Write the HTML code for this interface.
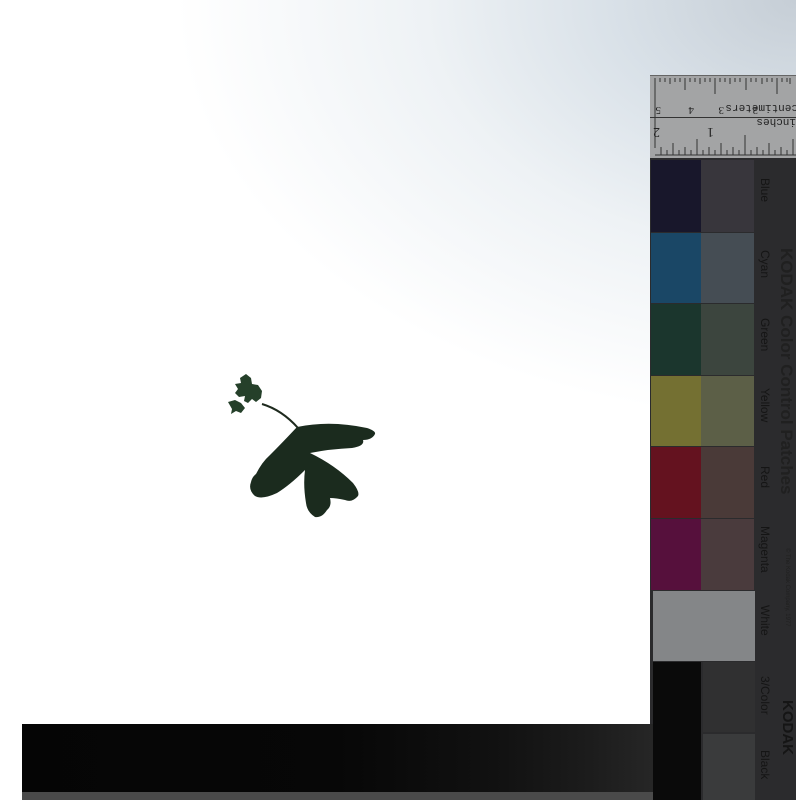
<!DOCTYPE html>
<html><head><meta charset="utf-8"><style>
html,body{margin:0;padding:0}
body{width:796px;height:800px;position:relative;overflow:hidden;
background:radial-gradient(ellipse 620px 420px at 796px 0px,#c6ced6 0%,#d9e1e8 30%,#eef2f5 60%,#ffffff 100%);
font-family:"Liberation Sans",sans-serif}
.a{position:absolute}
.lab{position:absolute;width:40px;transform-origin:0 0;color:#151515;font-size:12px;white-space:nowrap}
</style></head><body>
<!-- ruler -->
<div class="a" style="left:650px;top:75px;width:146px;height:82px;background:#a3a4a5;border-top:1px solid #666"></div>
<div class="a" style="left:650px;top:117px;width:146px;height:1px;background:#333"></div>
<svg class="a" style="left:650px;top:75px" width="146" height="82">
<g stroke="#333" stroke-width="1">
<path d="M5 3v70M35 3v12M65 3v16M96 3v12M127 3v16M20 3v6M50 3v6M80 3v6M112 3v6M140 3v6M10 3v4M15 3v4M25 3v4M30 3v4M40 3v4M45 3v4M55 3v4M60 3v4M70 3v4M75 3v4M85 3v4M90 3v4M101 3v4M106 3v4M117 3v4M122 3v4M132 3v4M137 3v4"/>
<path d="M5 80h141M11 80v-8M23 80v-12M35 80v-8M47 80v-16M59 80v-8M71 80v-12M83 80v-8M95 80v-20M107 80v-8M119 80v-12M131 80v-8M143 80v-16M17 80v-5M29 80v-5M41 80v-5M53 80v-5M65 80v-5M77 80v-5M89 80v-5M101 80v-5M113 80v-5M125 80v-5M137 80v-5"/>
</g>
<g font-family="Liberation Serif" font-size="11" fill="#222" transform="rotate(180 73 41)">
<text x="135" y="50">5</text><text x="102" y="50">4</text><text x="72" y="50">3</text><text x="38" y="50">2</text>
<text x="-2" y="52" font-family="Liberation Mono" font-size="11">centimeters</text>
<text x="0" y="38" font-family="Liberation Mono" font-size="11">inches</text>
<text x="136" y="29" font-size="14">2</text><text x="82" y="29" font-size="14">1</text>
</g></svg>
<!-- chart -->
<div class="a" style="left:650px;top:158px;width:146px;height:642px;background:#2b2b2d"></div>
<div class="a" style="left:651px;top:160px;width:50px;height:72px;background:#18172b"></div>
<div class="a" style="left:701px;top:160px;width:53px;height:72px;background:#38363c"></div>
<div class="a" style="left:651px;top:233px;width:50px;height:70px;background:#1a4766"></div>
<div class="a" style="left:701px;top:233px;width:53px;height:70px;background:#454d54"></div>
<div class="a" style="left:651px;top:304px;width:50px;height:71px;background:#1b362d"></div>
<div class="a" style="left:701px;top:304px;width:53px;height:71px;background:#3c453e"></div>
<div class="a" style="left:651px;top:376px;width:50px;height:70px;background:#747032"></div>
<div class="a" style="left:701px;top:376px;width:53px;height:70px;background:#5c5f47"></div>
<div class="a" style="left:651px;top:447px;width:50px;height:71px;background:#64121f"></div>
<div class="a" style="left:701px;top:447px;width:53px;height:71px;background:#4a3a38"></div>
<div class="a" style="left:651px;top:519px;width:50px;height:71px;background:#56103c"></div>
<div class="a" style="left:701px;top:519px;width:53px;height:71px;background:#4a3b3d"></div>
<div class="a" style="left:653px;top:591px;width:102px;height:70px;background:#848688"></div>
<div class="a" style="left:653px;top:662px;width:48px;height:138px;background:#0a0a0a"></div>
<div class="a" style="left:703px;top:662px;width:52px;height:70px;background:#303031"></div>
<div class="a" style="left:703px;top:734px;width:52px;height:66px;background:#3a3b3c"></div>
<!-- labels -->
<div class="lab" style="top:178px;left:772px;transform:rotate(90deg)">Blue</div>
<div class="lab" style="top:250px;left:772px;transform:rotate(90deg)">Cyan</div>
<div class="lab" style="top:318px;left:772px;transform:rotate(90deg)">Green</div>
<div class="lab" style="top:388px;left:772px;transform:rotate(90deg)">Yellow</div>
<div class="lab" style="top:466px;left:772px;transform:rotate(90deg)">Red</div>
<div class="lab" style="top:526px;left:772px;transform:rotate(90deg)">Magenta</div>
<div class="lab" style="top:605px;left:772px;transform:rotate(90deg)">White</div>
<div class="lab" style="top:676px;left:772px;transform:rotate(90deg)">3/Color</div>
<div class="lab" style="top:750px;left:772px;transform:rotate(90deg)">Black</div>
<div class="lab" style="top:248px;left:796px;transform:rotate(90deg);font-size:17px;font-weight:bold;color:#202020">KODAK Color Control Patches</div>
<div class="lab" style="top:548px;left:790px;transform:rotate(90deg);font-size:6px;color:#202020">© The Kodak Company, 1977</div>
<div class="lab" style="top:700px;left:796px;transform:rotate(90deg);font-size:15px;font-weight:bold;color:#151515">KODAK</div>
<!-- bottom bar -->
<div class="a" style="left:22px;top:724px;width:631px;height:69px;background:linear-gradient(90deg,#050505 0%,#070707 50%,#111 75%,#1c1c1c 90%,#262626 100%)"></div>
<div class="a" style="left:22px;top:792px;width:631px;height:8px;background:#4a4a4a"></div>
<!-- leaf -->
<svg class="a" style="left:0;top:0" width="650" height="720">
<path d="M262 404 Q282 410 298 428" stroke="#1e2a1e" stroke-width="2" fill="none"/>
<g fill="#25402a">
<path d="M240 378l6-4 5 4 1 6 6 1 4 6-1 7-5 4-4-3-4 4-4-2 1-5-6 1-4-4 3-4-3-5 6-1z"/>
<path d="M228 402l7-2 6 3 4 5-4 5-5-2-5 3 1-5z"/>
</g>
<path fill="#1b2b1e" d="M297 427 Q330 420 367 428 Q376 431 375 434 Q372 440 363 440 Q365 446 352 448 Q330 449 310 453 Q335 465 353 483 Q360 492 358 496 Q352 503 345 500 Q336 498 330 498 Q332 506 327 510 Q322 518 315 517 Q307 512 306 503 Q303 485 305 470 Q290 485 277 493 Q262 500 255 496 Q248 490 251 482 Q252 477 256 474 Q262 462 270 455 Q282 443 297 427 Z"/>
</svg>
</body></html>
